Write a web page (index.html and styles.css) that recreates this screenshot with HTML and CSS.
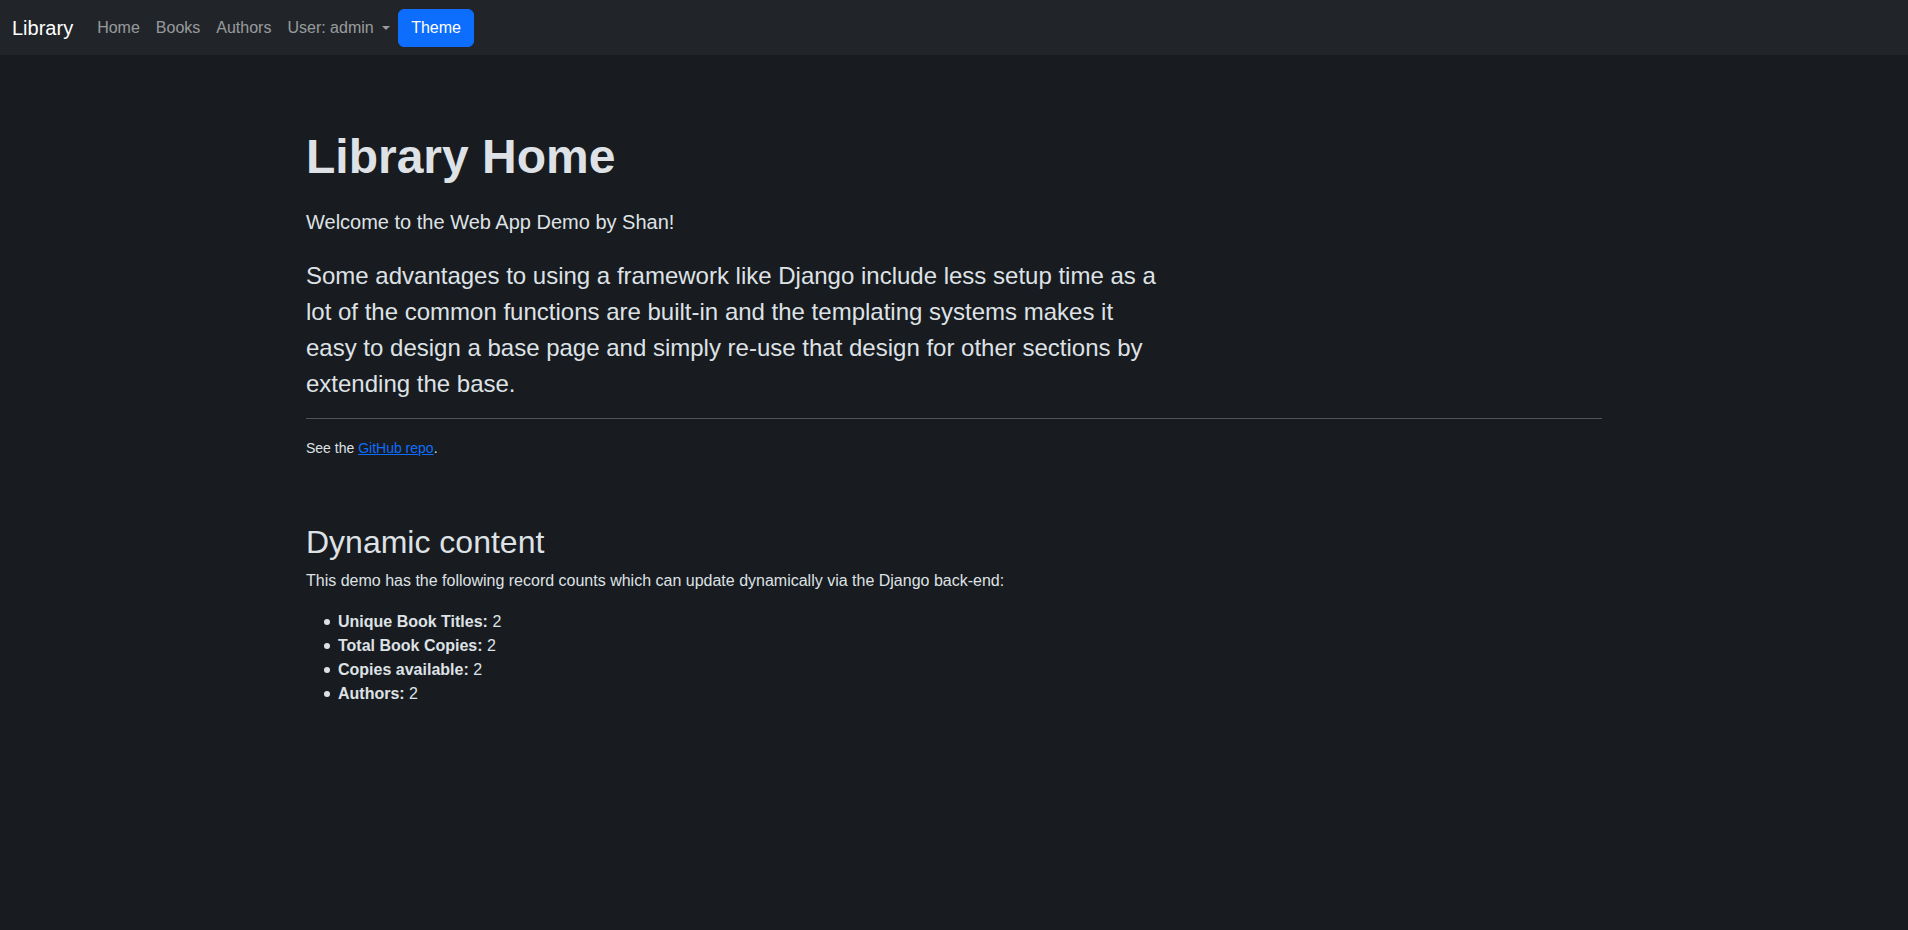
FILE: index.html
```html
<!DOCTYPE html>
<html lang="en">
<head>
<meta charset="utf-8">
<title>Library</title>
<link rel="stylesheet" href="styles.css">
</head>
<body>
<nav class="navbar">
  <a class="brand" href="#">Library</a>
  <ul class="nav">
    <li><a class="nav-link" href="#">Home</a></li>
    <li><a class="nav-link" href="#">Books</a></li>
    <li><a class="nav-link" href="#">Authors</a></li>
    <li><a class="nav-link dropdown-toggle" href="#">User: admin</a></li>
  </ul>
  <button class="btn-primary" type="button">Theme</button>
</nav>
<main class="container">
  <section class="intro">
    <h1 class="title">Library Home</h1>
    <p class="welcome">Welcome to the Web App Demo by Shan!</p>
    <p class="lead">Some advantages to using a framework like Django include less setup time as a lot of the common functions are built-in and the templating systems makes it easy to design a base page and simply re-use that design for other sections by extending the base.</p>
  </section>
  <hr class="divider">
  <p class="repo"><small>See the <a href="#">GitHub repo</a>.</small></p>
  <section class="dynamic">
    <h2 class="subtitle">Dynamic content</h2>
    <p class="desc">This demo has the following record counts which can update dynamically via the Django back-end:</p>
    <ul class="counts">
      <li><strong>Unique Book Titles:</strong> 2</li>
      <li><strong>Total Book Copies:</strong> 2</li>
      <li><strong>Copies available:</strong> 2</li>
      <li><strong>Authors:</strong> 2</li>
    </ul>
  </section>
</main>
</body>
</html>
```
FILE: styles.css
```css
* { box-sizing: border-box; }
html, body { height: 100%; }
body {
  margin: 0;
  background: #181b1f;
  color: #dee2e6;
  font-family: "Liberation Sans", Arial, sans-serif;
  font-size: 16px;
  line-height: 1.5;
}
.navbar {
  display: flex;
  align-items: center;
  background: #212529;
  height: 55px;
  padding: 0 12px;
}
.brand {
  color: #fff;
  text-decoration: none;
  font-size: 20px;
  line-height: 30px;
  padding: 5px 0;
  margin-right: 16px;
}
.nav {
  display: flex;
  list-style: none;
  margin: 0;
  padding: 0;
}
.nav-link {
  display: block;
  padding: 8px;
  color: rgba(255, 255, 255, 0.55);
  text-decoration: none;
}
.dropdown-toggle::after {
  content: "";
  display: inline-block;
  margin-left: 8.5px;
  vertical-align: 3px;
  border-top: 4.8px solid;
  border-right: 4.8px solid transparent;
  border-left: 4.8px solid transparent;
  border-bottom: 0;
}
.btn-primary {
  font-family: inherit;
  font-size: 16px;
  line-height: 24px;
  padding: 6px 12px;
  color: #fff;
  background: #0d6efd;
  border: 1px solid #0d6efd;
  border-radius: 6px;
  cursor: pointer;
}
.container {
  max-width: 1320px;
  margin: 0 auto;
  padding: 73px 12px 0;
}
.intro { max-width: 856px; }
.title {
  margin: 0 0 21px;
  font-size: 48px;
  line-height: 1.2;
  font-weight: 700;
}
.welcome {
  margin: 0 0 21px;
  font-size: 20px;
  line-height: 30px;
}
.lead {
  margin: 0;
  font-size: 24px;
  line-height: 36px;
  font-weight: 400;
}
.divider {
  margin: 16px 0 17px;
  border: 0;
  border-top: 1px solid rgba(222, 226, 230, 0.28);
}
.repo { margin: 0; }
.repo small { font-size: 14px; }
.repo a { color: #0d6efd; }
.dynamic { margin-top: 63px; }
.subtitle {
  margin: 0 0 8px;
  font-size: 32px;
  line-height: 1.2;
  font-weight: 400;
}
.desc { margin: 0 0 17px; }
.counts {
  margin: 0;
  padding-left: 32px;
  list-style: none;
}
.counts li::before {
  content: "";
  display: inline-block;
  width: 6px;
  height: 6px;
  border-radius: 50%;
  background: currentColor;
  margin-left: -14.5px;
  margin-right: 8.5px;
  vertical-align: 2px;
}
```
